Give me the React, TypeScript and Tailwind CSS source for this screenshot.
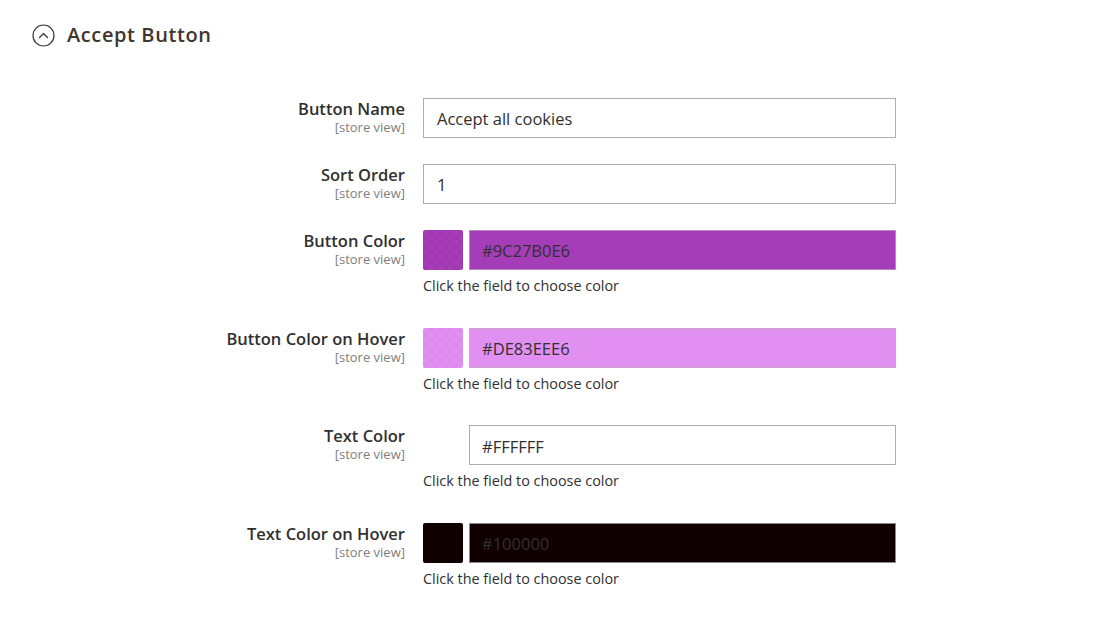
import React from 'react';

type Row = {
  label: string;
  value: string;
  kind: 'text' | 'color';
  swatch?: string;
  field?: string;
};

const rows: Row[] = [
  { label: 'Button Name', value: 'Accept all cookies', kind: 'text' },
  { label: 'Sort Order', value: '1', kind: 'text' },
  { label: 'Button Color', value: '#9C27B0E6', kind: 'color', swatch: 'bg-[#9C27B0E6]', field: 'bg-[#a53db8] border-[#b48bbd]' },
  { label: 'Button Color on Hover', value: '#DE83EEE6', kind: 'color', swatch: 'bg-[#DE83EEE6]', field: 'bg-[#e18ff0] border-[#c8a6cf]' },
  { label: 'Text Color', value: '#FFFFFF', kind: 'color', swatch: 'bg-white', field: 'bg-white border-[#adadad]' },
  { label: 'Text Color on Hover', value: '#100000', kind: 'color', swatch: 'bg-[#100000]', field: 'bg-[#100000] border-[#8a8a8a]' },
];

function CollapseIcon() {
  return (
    <svg width="23" height="23" viewBox="0 0 23 23" fill="none">
      <circle cx="11.5" cy="11.5" r="10.5" stroke="#41362f" strokeWidth="1.2" />
      <path d="M7.5 13.5 L11.5 9.5 L15.5 13.5" stroke="#41362f" strokeWidth="1.3" strokeLinecap="round" strokeLinejoin="round" />
    </svg>
  );
}

export default function App() {
  return (
    <div className="min-h-[622px] w-[1100px] bg-white text-[#303030] font-['Open_Sans',sans-serif]">
      {/* section title */}
      <div className="flex items-center gap-[12px] pl-[32px] pt-[23px]">
        <CollapseIcon />
        <h2 className="text-[20px] font-semibold tracking-[0.03em] text-[#41362f] leading-[24px]">Accept Button</h2>
      </div>

      <div className="mt-[51px] flex flex-col">
        {rows.map(row => (
          <div key={row.label} className={`flex ${row.kind === 'color' ? 'mb-[33.7px]' : 'mb-[26px]'}`}>
            <div className="w-[405px] shrink-0 text-right pt-[2px]">
              <div className="text-[16.5px] font-semibold leading-[18px] text-[#303030]">{row.label}</div>
              <div className="mt-[2px] text-[13px] leading-[14px] text-[#808080]">[store view]</div>
            </div>

            <div className="ml-[18px] w-[473px]">
              {row.kind === 'text' ? (
                <div className="h-[40px] border border-[#adadad] flex items-center px-[13px] pt-[3px] text-[16.5px] text-[#303030]">
                  {row.value}
                </div>
              ) : (
                <>
                  <div className="flex gap-[6px]">
                    <div className="relative h-[40px] w-[40px] shrink-0 overflow-hidden rounded-[2px] bg-white bg-[repeating-conic-gradient(#d4d4d4_0_25%,#ffffff_0_50%)] bg-[length:10px_10px]">
                      <div className={`absolute inset-0 ${row.swatch}`} />
                    </div>
                    <div className={`h-[40px] flex-1 border flex items-center px-[12px] pt-[3px] text-[16.5px] text-[#303030] ${row.field}`}>
                      {row.value}
                    </div>
                  </div>
                  <div className="mt-[8px] text-[14.4px] leading-[16px] text-[#303030]">Click the field to choose color</div>
                </>
              )}
            </div>
          </div>
        ))}
      </div>
    </div>
  );
}
